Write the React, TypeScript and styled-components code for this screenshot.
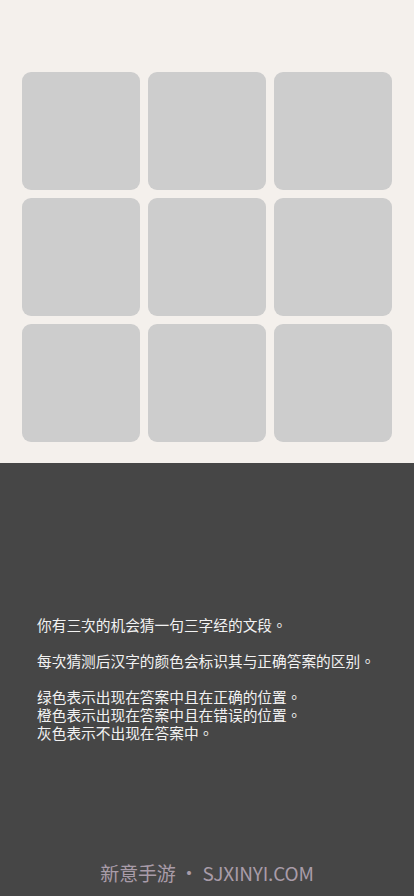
import React from 'react';
import styled, { createGlobalStyle } from 'styled-components';

const GlobalStyle = createGlobalStyle`
  html, body {
    margin: 0;
    padding: 0;
    background: #464646;
  }
  body {
    font-family: "Noto Sans CJK SC", "Noto Sans", sans-serif;
  }
`;

const Page = styled.div`
  position: relative;
  width: 414px;
  height: 896px;
  display: flex;
  flex-direction: column;
  overflow: hidden;
`;

const Board = styled.section`
  height: 463px;
  background: #f4f0ec;
  box-sizing: border-box;
  padding-top: 72px;
  display: flex;
  justify-content: center;
`;

const Grid = styled.div`
  display: grid;
  grid-template-columns: repeat(3, 118px);
  grid-auto-rows: 118px;
  gap: 8px;
  align-content: start;
`;

const Tile = styled.div`
  background: #cdcdcd;
  border-radius: 9px;
`;

const Rules = styled.section`
  flex: 1;
  background: #464646;
  display: flex;
  align-items: center;
  padding: 0 37px 2px;
`;

const RuleText = styled.div`
  color: #f2f2f2;
  font-size: 14.7px;
  line-height: 18px;
  font-family: "Noto Sans CJK TC", "Noto Sans CJK SC", sans-serif;
`;

const Line = styled.p<{ $gap?: boolean }>`
  margin: 0;
  margin-top: ${p => (p.$gap ? '18px' : '0')};
`;

const Watermark = styled.div`
  position: absolute;
  left: 0;
  right: 0;
  bottom: 10px;
  text-align: center;
  color: #a99ca9;
  font-size: 19px;
  font-family: "Noto Sans CJK SC", "Open Sans", sans-serif;
  letter-spacing: -0.2px;
`;

const tiles = Array.from({ length: 9 }, (_, i) => i);

const App = (): JSX.Element => (
  <Page>
    <GlobalStyle />
    <Board>
      <Grid>
        {tiles.map(i => (
          <Tile key={i} />
        ))}
      </Grid>
    </Board>
    <Rules>
      <RuleText>
        <Line>你有三次的机会猜一句三字经的文段。</Line>
        <Line $gap>每次猜测后汉字的颜色会标识其与正确答案的区别。</Line>
        <Line $gap>绿色表示出现在答案中且在正确的位置。</Line>
        <Line>橙色表示出现在答案中且在错误的位置。</Line>
        <Line>灰色表示不出现在答案中。</Line>
      </RuleText>
    </Rules>
    <Watermark>新意手游 • SJXINYI.COM</Watermark>
  </Page>
);

export default App;
